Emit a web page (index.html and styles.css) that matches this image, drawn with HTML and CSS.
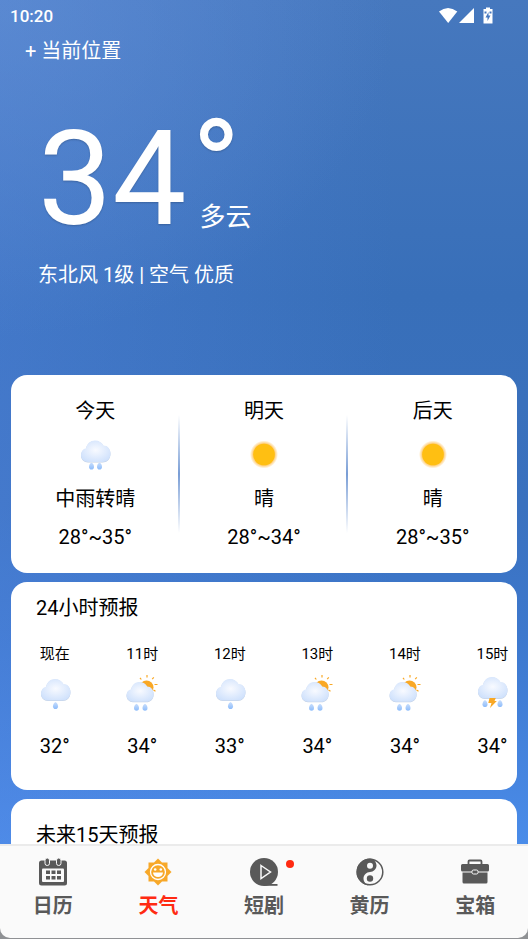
FILE: index.html
```html
<!DOCTYPE html>
<html lang="zh-CN">

<head>
    <meta charset="UTF-8" />
    <meta name="viewport" content="width=device-width, initial-scale=1.0">
    <title>天气</title>
    <link rel="stylesheet" href="styles.css">
</head>

<body>

    <!-- 图标定义 -->
    <svg class="sprite" width="0" height="0" aria-hidden="true">
        <defs>
            <radialGradient id="cloud-fill" cx="0.5" cy="0.45" r="0.6">
                <stop offset="0" stop-color="#f8faff" />
                <stop offset="1" stop-color="#cfe1fc" />
            </radialGradient>
            <linearGradient id="drop-fill" x1="0" y1="0" x2="0" y2="1">
                <stop offset="0" stop-color="#c9defc" />
                <stop offset="1" stop-color="#8dbcfb" />
            </linearGradient>
            <radialGradient id="sun-glow">
                <stop offset="0.72" stop-color="#ffab1a" stop-opacity="0.75" />
                <stop offset="1" stop-color="#ffab1a" stop-opacity="0" />
            </radialGradient>
            <path id="cloud" d="M13 28C9 28 6 25 6 21C6 17.500 8 15 11 14.300C12 9.500 15.500 6.500 20 6.500C24 6.500 27 8.500 28.500 11.500C32.500 11.500 35.500 15 35.500 19.500C35.500 24.500 32 28 27.500 28Z" />
            <path id="drop" d="M0 -3.500C1.500 -2.500 2.500 -1 2.500 0.700A2.500 2.800 0 0 1 -2.500 0.700C-2.500 -1 -1.500 -2.500 0 -3.500Z" />
            <symbol id="icon-sunny" viewBox="0 0 40 40">
                <circle cx="20" cy="19.500" r="14" fill="url(#sun-glow)" />
                <circle cx="20" cy="19.500" r="10.800" fill="#ffbf12" />
            </symbol>
            <symbol id="icon-rain" viewBox="0 0 40 40">
                <g transform="translate(0 -1)">
                    <use href="#cloud" y="0.600" fill="#c2cfe2" />
                    <use href="#cloud" fill="url(#cloud-fill)" />
                    <use href="#drop" x="16.500" y="32" fill="url(#drop-fill)" />
                    <use href="#drop" x="24.500" y="32" fill="url(#drop-fill)" />
                </g>
            </symbol>
            <symbol id="icon-drizzle" viewBox="0 0 40 40">
                <use href="#cloud" y="1.100" fill="#c2cfe2" />
                <use href="#cloud" y="0.500" fill="url(#cloud-fill)" />
                <use href="#drop" x="20.500" y="33.500" fill="url(#drop-fill)" />
            </symbol>
            <symbol id="icon-shower" viewBox="0 0 40 40">
                <circle cx="24.500" cy="15.500" r="7" fill="#f9a825" />
                <path d="M25 3v2.500M31.800 5.300L30.200 7.100M32.500 12.500h3M31.500 18l2 1.300M18 5.800L19.300 7.500" stroke="#f9a825" stroke-width="1.200" fill="none" />
                <g transform="translate(-1 4) scale(.92)">
                    <use href="#cloud" y="0.600" fill="#c2cfe2" />
                    <use href="#cloud" fill="url(#cloud-fill)" />
                </g>
                <use href="#drop" x="14.500" y="35.300" fill="url(#drop-fill)" />
                <use href="#drop" x="23" y="35.300" fill="url(#drop-fill)" />
            </symbol>
            <symbol id="icon-thunder" viewBox="0 0 40 40">
                <g transform="translate(0 -1.500)">
                    <use href="#cloud" y="0.600" fill="#c2cfe2" />
                    <use href="#cloud" fill="url(#cloud-fill)" />
                </g>
                <path d="M17.500 26h6.300l-1.300 3h2.300L18 36l1.500-5h-3.200z" fill="#f9a825" />
                <use href="#drop" x="13" y="31.500" fill="url(#drop-fill)" />
                <use href="#drop" x="28" y="31.500" fill="url(#drop-fill)" />
            </symbol>
        </defs>
    </svg>

    <main class="content">

        <!-- 状态栏 -->
        <div class="status-bar">
            <span>10:20</span>
            <svg width="56" height="18" viewBox="0 0 56 18" fill="#fff" aria-hidden="true">
                <path d="M0 4.500Q9 -2.500 18.300 4.500L9.200 16z" />
                <path d="M35 1v15H20z" />
                <path d="M47 .5h4v1.500h2.500v14.500h-9V2H47z" />
                <path d="M45.500 4.500h2v2h-2zM50.500 4.500h2v2h-2zM49.500 5l-3 5.500h2V14l3-5.500h-2z" fill="#4577bf" />
            </svg>
        </div>

        <button class="location" type="button">+ 当前位置</button>

        <!-- 当前天气 -->
        <section class="current">
            <div class="temp">
                <span class="temp-number">34</span>
                <div class="temp-side">
                    <span class="degree">°</span>
                    <span class="condition">多云</span>
                </div>
            </div>
            <p class="wind">东北风 1级 | 空气 优质</p>
        </section>

        <!-- 三天预报 -->
        <section class="card days">
            <div class="day">
                <span>今天</span>
                <svg class="weather-icon" aria-hidden="true"><use href="#icon-rain" /></svg>
                <span>中雨转晴</span>
                <span>28°~35°</span>
            </div>
            <div class="day">
                <span>明天</span>
                <svg class="weather-icon" aria-hidden="true"><use href="#icon-sunny" /></svg>
                <span>晴</span>
                <span>28°~34°</span>
            </div>
            <div class="day">
                <span>后天</span>
                <svg class="weather-icon" aria-hidden="true"><use href="#icon-sunny" /></svg>
                <span>晴</span>
                <span>28°~35°</span>
            </div>
        </section>

        <!-- 24小时预报 -->
        <section class="card hourly">
            <h2>24小时预报</h2>
            <div class="hours">
                <div class="hour">
                    <span class="time">现在</span>
                    <svg class="weather-icon" aria-hidden="true"><use href="#icon-drizzle" /></svg>
                    <span class="hour-temp">32°</span>
                </div>
                <div class="hour">
                    <span class="time">11时</span>
                    <svg class="weather-icon" aria-hidden="true"><use href="#icon-shower" /></svg>
                    <span class="hour-temp">34°</span>
                </div>
                <div class="hour">
                    <span class="time">12时</span>
                    <svg class="weather-icon" aria-hidden="true"><use href="#icon-drizzle" /></svg>
                    <span class="hour-temp">33°</span>
                </div>
                <div class="hour">
                    <span class="time">13时</span>
                    <svg class="weather-icon" aria-hidden="true"><use href="#icon-shower" /></svg>
                    <span class="hour-temp">34°</span>
                </div>
                <div class="hour">
                    <span class="time">14时</span>
                    <svg class="weather-icon" aria-hidden="true"><use href="#icon-shower" /></svg>
                    <span class="hour-temp">34°</span>
                </div>
                <div class="hour">
                    <span class="time">15时</span>
                    <svg class="weather-icon" aria-hidden="true"><use href="#icon-thunder" /></svg>
                    <span class="hour-temp">34°</span>
                </div>
            </div>
        </section>

        <!-- 15天预报 -->
        <section class="card fortnight">
            <h2>未来15天预报</h2>
        </section>

    </main>

    <!-- 底部导航 -->
    <div class="tab-wrap">
        <nav class="tabs">
            <a class="tab" href="#calendar">
                <svg width="28" height="28" viewBox="0 0 28 28" aria-hidden="true">
                    <rect x="0" y="2.500" width="28" height="25" rx="2.500" fill="#595959" />
                    <rect x="6" y="0" width="4.500" height="7.500" rx="2.200" fill="#595959" stroke="#fafafa" />
                    <rect x="17.500" y="0" width="4.500" height="7.500" rx="2.200" fill="#595959" stroke="#fafafa" />
                    <rect x="3" y="10.500" width="22" height="13.500" rx="1" fill="#fafafa" />
                    <path d="M7 12.500h4v3.500H7zM12.500 12.500h4v3.500h-4zM18 12.500h4v3.500h-4zM7 18h4v3.500H7zM12.500 18h4v3.500h-4zM18 18h4v3.500h-4z" fill="#595959" />
                </svg>
                <span>日历</span>
            </a>
            <a class="tab active" href="#weather">
                <svg width="28" height="28" viewBox="0 0 28 28" aria-hidden="true">
                    <path d="M14 .5L18 4.500H23.500V10L27.500 14L23.500 18V23.500H18L14 27.500L10 23.500H4.500V18L.5 14L4.500 10V4.500H10z" fill="#f7a829" />
                    <circle cx="14" cy="14" r="7.500" fill="none" stroke="#fff" stroke-width="1.300" />
                    <circle cx="11.200" cy="11.500" r="1.300" fill="#fff" />
                    <circle cx="16.800" cy="11.500" r="1.300" fill="#fff" />
                    <path d="M9 14.500h10a5 4.500 0 0 1-10 0z" fill="#fff" />
                </svg>
                <span>天气</span>
            </a>
            <a class="tab" href="#drama">
                <span class="icon-box">
                    <svg width="28" height="28" viewBox="0 0 28 28" aria-hidden="true">
                        <circle cx="14" cy="14" r="14" fill="#595959" />
                        <path d="M14 26h13.500v1.800H14z" fill="#595959" />
                        <path d="M11 7.500l9.500 6.500-9.500 6.500z" fill="none" stroke="#fafafa" stroke-width="1.500" />
                    </svg>
                    <i class="dot"></i>
                </span>
                <span>短剧</span>
            </a>
            <a class="tab" href="#almanac">
                <svg width="28" height="28" viewBox="0 0 28 28" aria-hidden="true">
                    <circle cx="14" cy="14" r="12.800" fill="#fafafa" stroke="#595959" stroke-width="1.500" />
                    <path d="M14 .5a13.500 13.500 0 0 0 0 27C10 27 7.500 24 7.500 20.500S10.500 14 14 14s6.500-3 6.500-6.500S17.500.5 14 .5z" fill="#595959" />
                    <circle cx="14" cy="7.800" r="3" fill="#fafafa" />
                    <circle cx="14" cy="20.500" r="3.200" fill="#595959" />
                </svg>
                <span>黄历</span>
            </a>
            <a class="tab" href="#toolbox">
                <svg width="28" height="28" viewBox="0 0 28 28" aria-hidden="true">
                    <path d="M7.500 7V3.500q0-1 1-1h11q1 0 1 1V7" fill="none" stroke="#595959" stroke-width="1.800" />
                    <path d="M1.500 6h25q1.500 0 1.500 1.500V12q0 1.500-1.500 1.500h-25Q0 13.500 0 12V7.500Q0 6 1.500 6zM1.500 14.500h25V24q0 1.500-1.500 1.500H3Q1.500 25.500 1.500 24z" fill="#595959" />
                    <rect x="11" y="12" width="6" height="4" rx="1.500" fill="#595959" stroke="#fafafa" stroke-width="1" />
                </svg>
                <span>宝箱</span>
            </a>
        </nav>
    </div>

</body>

</html>
```
FILE: styles.css
```css
* {
    box-sizing: border-box;
}

body {
    margin: 0;
    height: 100vh;
    display: flex;
    flex-direction: column;
    overflow: hidden;
    font-family: Roboto, "Noto Sans CJK SC", sans-serif;
    font-size: 20px;
    line-height: 28px;
    color: #000;
}

.sprite {
    position: absolute;
}

.content {
    flex: 1;
    min-height: 0;
    overflow: hidden;
    background:
        radial-gradient(ellipse 75% 40% at 0% 0%, rgba(104, 148, 216, 0.5), rgba(90, 140, 220, 0) 100%),
        linear-gradient(90deg, rgba(86, 136, 228, 0.35), rgba(70, 125, 220, 0) 75%),
        linear-gradient(180deg, #4678be 0%, #386fb9 35%, #3a71bf 60%, #3d78cd 75%, #4685e0 92%, #4a8ce9 100%);
}

/* 状态栏 */
.status-bar {
    display: flex;
    justify-content: space-between;
    align-items: center;
    height: 32px;
    padding: 0 33px 0 10px;
    font-size: 17px;
    font-weight: 500;
    color: #fff;
}

.location {
    display: block;
    margin: 5px 0 0 25px;
    padding: 0;
    border: none;
    background: none;
    font: inherit;
    color: #fff;
    cursor: pointer;
}

/* 当前天气 */
.current {
    padding: 47px 38px 86px;
    color: #fff;
}

.temp {
    display: flex;
    gap: 5px;
    text-shadow: 0 1px 2px rgba(0, 0, 0, 0.2);
}

.temp-number {
    font-size: 132px;
    line-height: 134px;
}

.temp-side {
    display: flex;
    flex-direction: column;
    padding-top: 25px;
}

.degree {
    font-size: 132px;
    line-height: 62px;
}

.condition {
    padding-left: 8px;
    font-size: 26px;
    line-height: 36px;
    text-shadow: none;
}

.wind {
    margin: 15px 0 0;
}

/* 卡片 */
.card {
    margin: 0 11px 9px;
    border-radius: 16px;
    background-color: #fff;
    overflow: hidden;
}

.card h2 {
    margin: 0;
    padding: 0 25px;
    font-size: 20px;
    font-weight: 400;
}

.weather-icon {
    width: 40px;
    height: 40px;
}

.days {
    display: grid;
    grid-template-columns: repeat(3, 1fr);
    padding: 22px 0;
}

.day {
    display: flex;
    flex-direction: column;
    align-items: center;
    gap: 10px;
}

/* 分隔线 */
.day:not(:last-child) {
    background: linear-gradient(180deg, rgba(64, 116, 196, 0), rgba(64, 116, 196, 0.7) 50%, rgba(64, 116, 196, 0)) 100% 50% / 2px 118px no-repeat;
}

.hourly {
    padding: 12px 0 30px;
}

.hours {
    display: grid;
    grid-auto-flow: column;
    grid-auto-columns: 17.3%;
    margin-top: 22px;
}

.hour {
    display: flex;
    flex-direction: column;
    align-items: center;
    gap: 8px;
}

.time {
    font-size: 15px;
    line-height: 20px;
}

.hour-temp {
    margin-top: 12px;
}

.fortnight {
    padding: 22px 0;
}

/* 底部导航 */
.tab-wrap {
    background-color: #8f9194;
}

.tabs {
    display: grid;
    grid-template-columns: repeat(5, 1fr);
    margin-bottom: 1px;
    padding: 12px 0 18px;
    border-top: 2px solid #ebebeb;
    border-radius: 0 0 10px 10px;
    background-color: #fafafa;
}

.tab {
    display: flex;
    flex-direction: column;
    align-items: center;
    gap: 6px;
    font-weight: 700;
    color: #595959;
    text-decoration: none;
}

.tab svg {
    display: block;
}

.tab.active {
    color: #ff2a12;
}

.icon-box {
    position: relative;
}

.dot {
    position: absolute;
    top: 2px;
    right: -16px;
    width: 8px;
    height: 8px;
    border-radius: 50%;
    background-color: #ff2a12;
}
```
